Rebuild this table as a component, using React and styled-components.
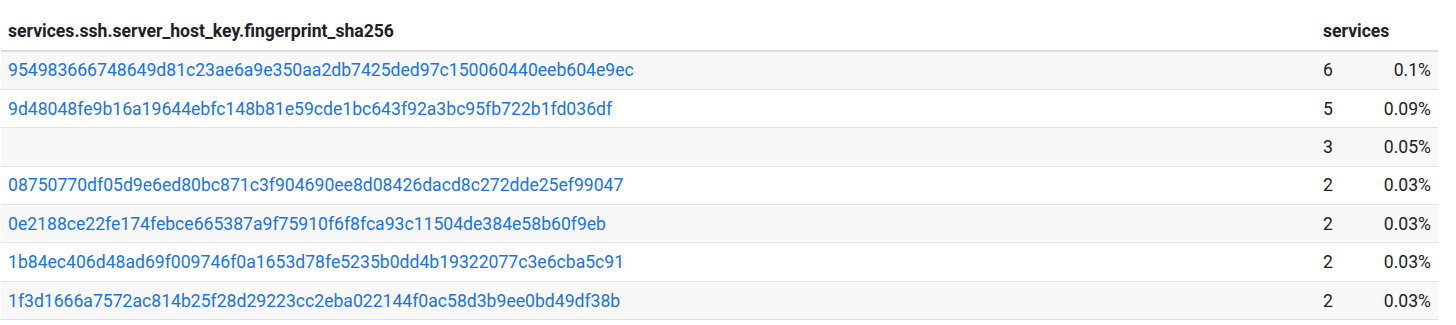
import React from "react"
import styled, { createGlobalStyle } from "styled-components"

const GlobalStyle = createGlobalStyle`
  body {
    margin: 0;
    background: #fff;
    font-family: Roboto, "Liberation Sans", sans-serif;
  }
`

const Wrapper = styled.div`
  padding: 0 18px 0 1px;
`

const Table = styled.table`
  width: 100%;
  border-collapse: collapse;
  font-size: 17.6px;
  color: #202124;
`

const HeadCell = styled.th`
  box-sizing: border-box;
  height: 51px;
  padding: 11px 7px 0;
  text-align: left;
  font-weight: 700;
  border-bottom: 2px solid #dcdcdc;
  vertical-align: middle;
`

const Row = styled.tr`
  background: ${props => props.striped ? "#f8f8f8" : "#fff"};
  border-bottom: 1px solid #e2e2e2;
`

const Cell = styled.td`
  box-sizing: border-box;
  height: 38.4px;
  padding: 0 7px;
  text-align: ${props => props.right ? "right" : "left"};
  width: ${props => props.w || "auto"};
`

const HashLink = styled.a`
  color: #1a73e8;
  text-decoration: none;
`

const rows = [
  ["954983666748649d81c23ae6a9e350aa2db7425ded97c150060440eeb604e9ec", 6, "0.1%"],
  ["9d48048fe9b16a19644ebfc148b81e59cde1bc643f92a3bc95fb722b1fd036df", 5, "0.09%"],
  ["", 3, "0.05%"],
  ["08750770df05d9e6ed80bc871c3f904690ee8d08426dacd8c272dde25ef99047", 2, "0.03%"],
  ["0e2188ce22fe174febce665387a9f75910f6f8fca93c11504de384e58b60f9eb", 2, "0.03%"],
  ["1b84ec406d48ad69f009746f0a1653d78fe5235b0dd4b19322077c3e6cba5c91", 2, "0.03%"],
  ["1f3d1666a7572ac814b25f28d29223cc2eba022144f0ac58d3b9ee0bd49df38b", 2, "0.03%"],
]

const App = () => (
  <Wrapper>
    <GlobalStyle />
    <Table>
      <thead>
        <tr>
          <HeadCell>services.ssh.server_host_key.fingerprint_sha256</HeadCell>
          <HeadCell colSpan={2}>services</HeadCell>
        </tr>
      </thead>
      <tbody>
        {rows.map(([hash, count, pct], i) => (
          <Row key={i} striped={i % 2 === 0}>
            <Cell>{hash && <HashLink href="#">{hash}</HashLink>}</Cell>
            <Cell w="50px">{count}</Cell>
            <Cell right w="72px">{pct}</Cell>
          </Row>
        ))}
      </tbody>
    </Table>
  </Wrapper>
)

export default App
